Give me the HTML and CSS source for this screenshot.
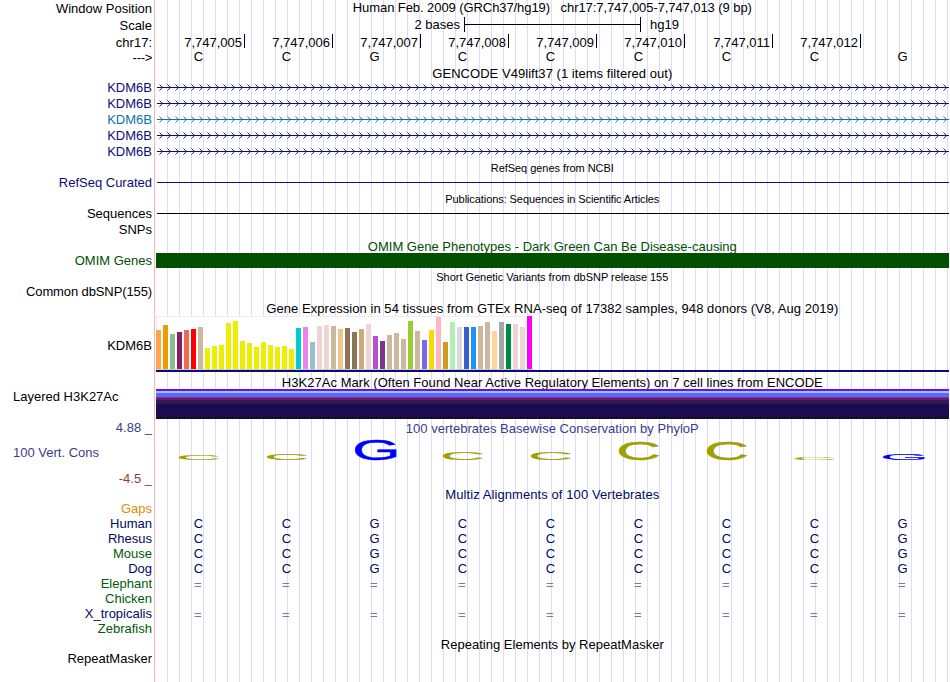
FILE: index.html
```html
<!DOCTYPE html>
<html lang="en">
<head>
<meta charset="utf-8">
<title>Genome Browser</title>
<link rel="stylesheet" href="styles.css">
</head>
<body>
<main class="browser">
  <div class="row h17"><span class="label">Window Position</span><div class="plot title top"><span data-w="399">Human Feb. 2009 (GRCh37/hg19)   chr17:7,747,005-7,747,013 (9 bp)</span></div></div>
  <div class="row h17"><span class="label">Scale</span><div class="plot scale"><span class="scale-size">2 bases</span><i class="scale-bar"></i><span>hg19</span></div></div>
  <div class="row h17"><span class="label">chr17:</span><div class="plot ruler" id="ruler"></div></div>
  <div class="row h15"><span class="label arrow-label">---&gt;</span><div class="plot bases black" data-bases="CCGCCCCCG"></div></div>
  <div class="row h14"><div class="plot title"><span data-w="240">GENCODE V49lift37 (1 items filtered out)</span></div></div>
  <div class="row h16 navy"><span class="label">KDM6B</span><div class="plot gene"></div></div>
  <div class="row h16 navy"><span class="label">KDM6B</span><div class="plot gene"></div></div>
  <div class="row h16 teal"><span class="label">KDM6B</span><div class="plot gene"></div></div>
  <div class="row h16 navy"><span class="label">KDM6B</span><div class="plot gene"></div></div>
  <div class="row h16 navy"><span class="label">KDM6B</span><div class="plot gene"></div></div>
  <div class="row h15"><div class="plot title small low"><span data-w="123">RefSeq genes from NCBI</span></div></div>
  <div class="row h16 navy"><span class="label">RefSeq Curated</span><div class="plot line"></div></div>
  <div class="row h15"><div class="plot title small low"><span data-w="214">Publications: Sequences in Scientific Articles</span></div></div>
  <div class="row h16"><span class="label">Sequences</span><div class="plot line"></div></div>
  <div class="row h16"><span class="label">SNPs</span></div>
  <div class="row h15 green"><div class="plot title low"><span data-w="369">OMIM Gene Phenotypes - Dark Green Can Be Disease-causing</span></div></div>
  <div class="row h16 green"><span class="label">OMIM Genes</span><div class="plot omim"></div></div>
  <div class="row h15"><div class="plot title small low"><span data-w="232">Short Genetic Variants from dbSNP release 155</span></div></div>
  <div class="row h17"><span class="label flush"><span data-w="126">Common dbSNP(155)</span></span></div>
  <div class="row h15"><div class="plot title"><span data-w="572">Gene Expression in 54 tissues from GTEx RNA-seq of 17382 samples, 948 donors (V8, Aug 2019)</span></div></div>
  <div class="row h56"><span class="label">KDM6B</span><div class="plot gtex"><div class="tissues" id="tissues"></div></div></div>
  <div class="row h17"><div class="plot title h3k-title"><span data-w="541">H3K27Ac Mark (Often Found Near Active Regulatory Elements) on 7 cell lines from ENCODE</span></div></div>
  <div class="row h32"><span class="label wide">Layered H3K27Ac</span><div class="plot bands"></div></div>
  <div class="row h15 cons"><span class="label score">4.88 _</span><div class="plot title"><span data-w="293">100 vertebrates Basewise Conservation by PhyloP</span></div></div>
  <div class="row h35 cons"><span class="label wide">100 Vert. Cons</span><div class="plot"><svg class="logo" id="logo" width="793" height="35"></svg></div></div>
  <div class="row h15 maroon"><span class="label">-4.5 _</span></div>
  <div class="row h15 multiz"><div class="plot title low"><span data-w="214">Multiz Alignments of 100 Vertebrates</span></div></div>
  <div class="row h15 orange"><span class="label">Gaps</span></div>
  <div class="row h15 ink"><span class="label">Human</span><div class="plot bases" data-bases="CCGCCCCCG"></div></div>
  <div class="row h15 ink"><span class="label">Rhesus</span><div class="plot bases" data-bases="CCGCCCCCG"></div></div>
  <div class="row h15 forest"><span class="label">Mouse</span><div class="plot bases" data-bases="CCGCCCCCG"></div></div>
  <div class="row h15 ink"><span class="label">Dog</span><div class="plot bases" data-bases="CCGCCCCCG"></div></div>
  <div class="row h15 forest"><span class="label">Elephant</span><div class="plot bases gap" data-bases="========="></div></div>
  <div class="row h15 forest"><span class="label">Chicken</span></div>
  <div class="row h15 ink"><span class="label">X_tropicalis</span><div class="plot bases gap" data-bases="========="></div></div>
  <div class="row h15 forest"><span class="label">Zebrafish</span></div>
  <div class="row h15"><div class="plot title low"><span data-w="223">Repeating Elements by RepeatMasker</span></div></div>
  <div class="row h15"><span class="label">RepeatMasker</span></div>
</main>
<script src="tracks.js"></script>
</body>
</html>
```
FILE: styles.css
```css
* { box-sizing: border-box; }
body { margin: 0; background: #fff; overflow: hidden; }

.browser {
  width: 949px;
  height: 682px;
  overflow: hidden;
  font: 13px/15px "Liberation Sans", Arial, sans-serif;
  color: #000;
  background:
    linear-gradient(#ffb4b4, #ffb4b4) 154px 0 / 1px 100% no-repeat,
    repeating-linear-gradient(90deg, #dcdcfa 0 1px, transparent 1px 12px) 167px 0 / 782px 100% no-repeat;
}

.row {
  display: grid;
  grid-template-columns: 152px 793px;
  grid-template-rows: 100%;
  column-gap: 4px;
  align-items: center;
  white-space: pre;
}
.h14 { height: 14px; }
.h15 { height: 15px; }
.h16 { height: 16px; }
.h17 { height: 17px; }
.h32 { height: 32px; }
.h35 { height: 35px; }
.h56 { height: 56px; }

.label { grid-column: 1; text-align: right; }
.h16 .label { align-self: start; }
.h17 .label { align-self: start; padding-top: 1px; }
.h17 .label.flush { padding-top: 0; }
.h56 .label { padding-top: 2px; }
.label.wide { text-align: left; padding-left: 13px; align-self: start; }
.h35 .label.wide { padding-top: 9px; }
.label.score { margin-top: -2px; }
.arrow-label { letter-spacing: -0.3px; margin-top: -2px; }
.plot { grid-column: 2; }
.title { text-align: center; margin-left: -0.4px; }
.title.top { margin-top: -2px; }
.title.low { margin-top: 2px; }
.small { font-size: 11px; }
.h3k-title { margin-top: 3px; }

.navy { color: #0c0c78; }
.teal { color: #0c72ae; }
.green { color: #005000; }
.cons { color: #3c3c8c; }
.maroon { color: #8c3c3c; }
.orange { color: #e68a00; }
.ink, .multiz, .bases { color: #000a64; }
.forest { color: #005a0a; }

.scale { display: flex; align-items: center; height: 17px; margin-top: -2px; }
.scale-size { width: 304px; text-align: right; }
.scale-bar {
  width: 177px;
  height: 15px;
  margin: 0 9px 0 4px;
  border: solid #000;
  border-width: 0 1px;
  background: linear-gradient(#000, #000) 0 7px / 100% 1px no-repeat;
}

.ruler { display: flex; align-self: start; padding-left: 1px; }
.ruler span {
  width: 88px;
  height: 14px;
  padding: 1px 2px 0 0;
  line-height: 15px;
  text-align: right;
  border-right: 1px solid #000;
}

.bases { display: flex; margin-left: -1.5px; }
.bases span { flex: none; width: 88px; text-align: center; }
.bases.black { color: #000; margin-top: -4px; }
.bases.gap { color: #7878aa; margin: 2px 0 0 -2.2px; }

.gene { height: 16px; }
.gene svg { display: block; }
.line { height: 1px; margin-left: 1px; background: currentColor; align-self: start; margin-top: 7px; }
.omim { height: 15px; align-self: start; background: #005000; }

.gtex { height: 56px; border-bottom: 2px solid #0c0c78; }
.tissues {
  display: flex;
  align-items: flex-end;
  gap: 2px;
  width: 378px;
  height: 54px;
  background: #fff;
  border-bottom: 1px solid #ccc;
  box-shadow: inset 0 1px #eee, inset 1px 0 #eee;
}
.tissues i { flex: none; width: 5px; }

.bands {
  height: 30px;
  align-self: start;
  background: linear-gradient(#8200ff 0 2px, #82d2ff 2px 4px, #6464ff 4px 8px, #6e3c96 8px 9px, #6e1964 9px 11px, #321950 11px 15px, #190c50 15px 28px, #190a28 28px);
}
.logo { display: block; overflow: visible; }
.logo text { font-size: 100px; stroke-width: 1.5px; }
.logo .C { fill: #a0a000; stroke: #a0a000; }
.logo .G { fill: #0000ff; stroke: #0000ff; }
```
FILE: tracks.js
```js
// Coordinate ruler: one tick per base.
const ruler = document.getElementById('ruler');
for (let n = 5; n <= 12; n++) {
  ruler.insertAdjacentHTML('beforeend', `<span>7,747,0${String(n).padStart(2, '0')}</span>`);
}

document.querySelectorAll('.bases').forEach(el => {
  el.innerHTML = [...el.dataset.bases].map(b => `<span>${b}</span>`).join('');
});

// Intron line with strand arrows every 8 pixels.
document.querySelectorAll('.gene').forEach(el => {
  let d = '';
  for (let x = 3.5; x < 793; x += 8) d += `M${x} 4.5l3 3l-3 3`;
  el.innerHTML = `<svg width="793" height="16" fill="none" stroke="currentColor"><path d="M1 7.5H793"/><path stroke-width=".9" d="${d}"/></svg>`;
});

// GTEx median expression: [bar height, tissue colour].
const tissues = [
  [39,'#ffa54f'],[44,'#ee9a00'],[35,'#8fbc8f'],[37,'#8b1c62'],[39,'#ee6a50'],[40,'#ff0000'],[42,'#cdb79e'],
  [21,'#eeee00'],[23,'#eeee00'],[24,'#eeee00'],[46,'#eeee00'],[48,'#eeee00'],[28,'#eeee00'],[26,'#eeee00'],
  [22,'#eeee00'],[27,'#eeee00'],[24,'#eeee00'],[22,'#eeee00'],[23,'#eeee00'],[20,'#eeee00'],[41,'#00cdcd'],
  [42,'#ee82ee'],[27,'#9ac0cd'],[43,'#eed5d2'],[44,'#eed5d2'],[43,'#cdb79e'],[40,'#eec591'],[41,'#8b7355'],
  [37,'#8b7355'],[40,'#cdaa7d'],[45,'#eed5d2'],[33,'#b452cd'],[28,'#7a378b'],[34,'#cdb79e'],[36,'#cdb79e'],
  [30,'#cdb79e'],[48,'#9acd32'],[38,'#cdb79e'],[29,'#7a67ee'],[39,'#ffd700'],[52,'#ffb6c1'],[27,'#cd9b1d'],
  [47,'#b4eeb4'],[42,'#d9d9d9'],[42,'#3a5fcd'],[42,'#1e90ff'],[43,'#cdb79e'],[47,'#cdb79e'],[38,'#ffd39b'],
  [47,'#a6a6a6'],[45,'#008b45'],[45,'#eed5d2'],[42,'#eed5d2'],[53,'#ff00ff']
];
document.getElementById('tissues').innerHTML =
  tissues.map(([h, c]) => `<i style="height:${h}px;background:${c}"></i>`).join('');

// Conservation logo: letters stretched to their score.
const scores = [['C',5],['C',6],['G',21],['C',8],['C',8],['C',18],['C',18],['C',2],['G',6]];
document.getElementById('logo').innerHTML = scores.map(([b, h], i) => {
  const base = h > 15 ? 24.4 : 23.8;
  return `<text class="${b}" transform="translate(${20.2 + i * 88} ${base}) scale(.62 ${h / 72})">${b}</text>`;
}).join('');

// Spread each title over its nominal width.
document.querySelectorAll('[data-w]').forEach(el => {
  const gap = (el.dataset.w - el.getBoundingClientRect().width) / el.textContent.length;
  el.style.letterSpacing = gap + 'px';
});
```
